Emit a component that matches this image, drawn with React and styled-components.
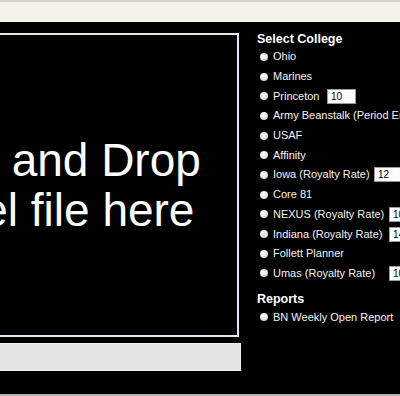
import styled, { createGlobalStyle } from "styled-components";

const colleges = [
    { name: "Ohio" },
    { name: "Marines" },
    { name: "Princeton", rate: "10", inputAt: 54 },
    { name: "Army Beanstalk (Period End Date)" },
    { name: "USAF" },
    { name: "Affinity" },
    { name: "Iowa (Royalty Rate)", rate: "12", inputAt: 101 },
    { name: "Core 81" },
    { name: "NEXUS (Royalty Rate)", rate: "10", inputAt: 116 },
    { name: "Indiana (Royalty Rate)", rate: "14", inputAt: 116 },
    { name: "Follett Planner" },
    { name: "Umas (Royalty Rate)", rate: "10", inputAt: 116 },
];

export default function App() {
    return (
        <>
            <GlobalStyle />
            <Page>
                <TopBar />
                <Main>
                    <UploadColumn>
                        <DropZone>
                            <p>Drag and Drop</p>
                            <p>Excel file here</p>
                        </DropZone>
                        <ProgressBar />
                    </UploadColumn>
                    <OptionsColumn>
                        <Heading>Select College</Heading>
                        {colleges.map((college) => (
                            <OptionRow key={college.name}>
                                <Radio type="radio" name="college" />
                                <Label $inputAt={college.inputAt}>{college.name}</Label>
                                {college.rate && <RateInput defaultValue={college.rate} readOnly />}
                            </OptionRow>
                        ))}
                        <Heading $spaced>Reports</Heading>
                        <OptionRow>
                            <Radio type="radio" name="report" />
                            <Label>BN Weekly Open Report</Label>
                        </OptionRow>
                    </OptionsColumn>
                </Main>
                <BottomStrip />
            </Page>
        </>
    );
}

const GlobalStyle = createGlobalStyle`
    body{
        margin: 0;
        background-color: #000000;
        font-family: "Liberation Sans", Arial, sans-serif;
        overflow: hidden;
    }
`;

const Page = styled.div`
    display: flex;
    flex-direction: column;
    width: 400px;
    height: 396px;
    overflow: hidden;
    background-color: #000000;
`;

const TopBar = styled.div`
    height: 20px;
    flex-shrink: 0;
    background-color: #f3f2e8;
    border-top: 2px solid #d3d1c9;
`;

const Main = styled.div`
    display: flex;
    flex: 1;
    min-height: 0;
`;

const UploadColumn = styled.div`
    display: flex;
    flex-direction: column;
    flex-shrink: 0;
    width: 380px;
    margin-left: -139px;
    padding-top: 11px;
`;

const DropZone = styled.div`
    display: flex;
    flex-direction: column;
    justify-content: center;
    align-items: center;
    box-sizing: border-box;
    width: 378px;
    height: 304px;
    border: 2px solid #e6e6f3;
    p{
        margin: 0;
        font-size: 46px;
        line-height: 50px;
        color: #ffffff;
        white-space: nowrap;
    }
`;

const ProgressBar = styled.div`
    box-sizing: border-box;
    height: 28px;
    margin-top: 6px;
    background-color: #e3e3e3;
    border: 1px solid #f2f2f2;
`;

const OptionsColumn = styled.div`
    display: flex;
    flex-direction: column;
    flex-shrink: 0;
    margin-left: 16px;
    padding-top: 10px;
    color: #f4f4f4;
    white-space: nowrap;
`;

const Heading = styled.h2`
    margin: ${(props) => (props.$spaced ? "9px" : "0")} 0 0 0;
    font-size: 12.5px;
    line-height: 15px;
    font-weight: 700;
    color: #ffffff;
`;

const OptionRow = styled.div`
    display: flex;
    align-items: center;
    height: 19.7px;
`;

const Radio = styled.input`
    appearance: none;
    width: 8px;
    height: 8px;
    margin: 0 5px 0 3px;
    border-radius: 50%;
    background: radial-gradient(circle at 40% 35%, #ffffff 0%, #e4e4e4 55%, #a9a9a9 100%);
`;

const Label = styled.span`
    display: inline-block;
    min-width: ${(props) => (props.$inputAt ? `${props.$inputAt}px` : "0")};
    font-size: 11px;
    line-height: 13px;
`;

const RateInput = styled.input`
    box-sizing: border-box;
    width: 29px;
    height: 15px;
    padding: 0 3px;
    border: 1px solid #9a9a9a;
    background-color: #ffffff;
    font-family: "Liberation Sans", Arial, sans-serif;
    font-size: 10px;
    color: #000000;
    outline: none;
`;

const BottomStrip = styled.div`
    height: 2px;
    flex-shrink: 0;
    background-color: #b3b3b3;
`;
